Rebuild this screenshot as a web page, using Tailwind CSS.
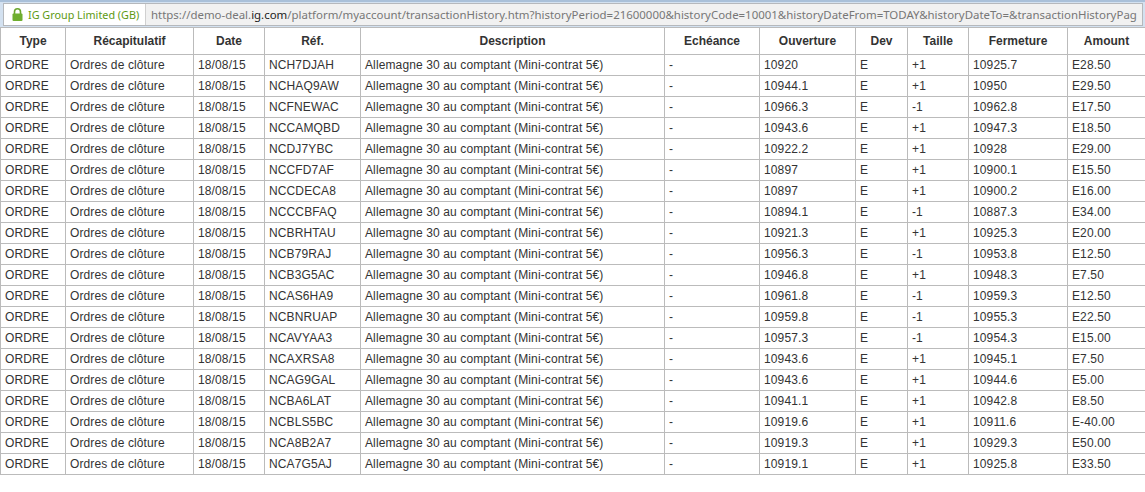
<!DOCTYPE html>
<html lang="fr">
  <head>
    <meta charset="UTF-8" />
    <title>Transaction history</title>
    <script src="https://cdn.jsdelivr.net/npm/@tailwindcss/browser@4"></script>
  </head>
  <body class="bg-white font-['Liberation_Sans',Arial,sans-serif] text-[12px] text-[#333] overflow-hidden">
    <!-- browser address bar -->
    <header class="h-[27px] bg-[#d3e1f0] border-t-2 border-[#a9c0d9] pt-[1px] pl-[3px] pr-[2px] overflow-hidden">
      <div class="h-[23px] flex bg-[#f1f1f1] border border-[#b5b8bc] font-['Noto_Sans',sans-serif] text-[11.45px] leading-[21px] whitespace-nowrap overflow-hidden">
        <div class="w-[142px] shrink-0 flex items-center bg-white border-r border-[#d0d0d0] pl-[8px]">
          <svg class="w-[11px] h-[13px] shrink-0" viewBox="0 0 11 13">
            <path d="M2.5 6V3.8a3 3 0 0 1 6 0V6" fill="none" stroke="#6aa52c" stroke-width="1.6" />
            <rect x="0.5" y="5.5" width="10" height="7.5" rx="1" fill="#6fae2f" />
          </svg>
          <span class="ml-[5px] text-[10.8px] text-[#5d9a12]">IG Group Limited (GB)</span>
        </div>
        <div class="pl-[5px] text-[#777]">https://demo-deal.<span class="text-[#222]">ig.com</span>/platform/myaccount/transactionHistory.htm?historyPeriod=21600000&amp;historyCode=10001&amp;historyDateFrom=TODAY&amp;historyDateTo=&amp;transactionHistoryPag</div>
      </div>
    </header>

    <table class="w-[1145px] table-fixed border-collapse [&_td]:border [&_td]:border-[#bbb] [&_td]:h-[21px] [&_td]:py-0 [&_td]:px-[4px] [&_td]:whitespace-nowrap [&_td]:tracking-[0.12px] [&_th]:border [&_th]:border-[#bbb] [&_th]:h-[27px] [&_th]:p-0 [&_th]:font-bold [&_th]:text-center">
      <colgroup>
        <col class="w-[65px]" /><col class="w-[128px]" /><col class="w-[71px]" /><col class="w-[96px]" /><col class="w-[304px]" /><col class="w-[95px]" /><col class="w-[96px]" /><col class="w-[52px]" /><col class="w-[61px]" /><col class="w-[99px]" /><col class="w-[78px]" />
      </colgroup>
      <thead>
        <tr><th>Type</th><th>Récapitulatif</th><th>Date</th><th>Réf.</th><th>Description</th><th>Echéance</th><th>Ouverture</th><th>Dev</th><th>Taille</th><th>Fermeture</th><th>Amount</th></tr>
      </thead>
      <tbody>
        <tr><td>ORDRE</td><td>Ordres de clôture</td><td>18/08/15</td><td>NCH7DJAH</td><td>Allemagne 30 au comptant (Mini-contrat 5€)</td><td>-</td><td>10920</td><td>E</td><td>+1</td><td>10925.7</td><td>E28.50</td></tr>
        <tr><td>ORDRE</td><td>Ordres de clôture</td><td>18/08/15</td><td>NCHAQ9AW</td><td>Allemagne 30 au comptant (Mini-contrat 5€)</td><td>-</td><td>10944.1</td><td>E</td><td>+1</td><td>10950</td><td>E29.50</td></tr>
        <tr><td>ORDRE</td><td>Ordres de clôture</td><td>18/08/15</td><td>NCFNEWAC</td><td>Allemagne 30 au comptant (Mini-contrat 5€)</td><td>-</td><td>10966.3</td><td>E</td><td>-1</td><td>10962.8</td><td>E17.50</td></tr>
        <tr><td>ORDRE</td><td>Ordres de clôture</td><td>18/08/15</td><td>NCCAMQBD</td><td>Allemagne 30 au comptant (Mini-contrat 5€)</td><td>-</td><td>10943.6</td><td>E</td><td>+1</td><td>10947.3</td><td>E18.50</td></tr>
        <tr><td>ORDRE</td><td>Ordres de clôture</td><td>18/08/15</td><td>NCDJ7YBC</td><td>Allemagne 30 au comptant (Mini-contrat 5€)</td><td>-</td><td>10922.2</td><td>E</td><td>+1</td><td>10928</td><td>E29.00</td></tr>
        <tr><td>ORDRE</td><td>Ordres de clôture</td><td>18/08/15</td><td>NCCFD7AF</td><td>Allemagne 30 au comptant (Mini-contrat 5€)</td><td>-</td><td>10897</td><td>E</td><td>+1</td><td>10900.1</td><td>E15.50</td></tr>
        <tr><td>ORDRE</td><td>Ordres de clôture</td><td>18/08/15</td><td>NCCDECA8</td><td>Allemagne 30 au comptant (Mini-contrat 5€)</td><td>-</td><td>10897</td><td>E</td><td>+1</td><td>10900.2</td><td>E16.00</td></tr>
        <tr><td>ORDRE</td><td>Ordres de clôture</td><td>18/08/15</td><td>NCCCBFAQ</td><td>Allemagne 30 au comptant (Mini-contrat 5€)</td><td>-</td><td>10894.1</td><td>E</td><td>-1</td><td>10887.3</td><td>E34.00</td></tr>
        <tr><td>ORDRE</td><td>Ordres de clôture</td><td>18/08/15</td><td>NCBRHTAU</td><td>Allemagne 30 au comptant (Mini-contrat 5€)</td><td>-</td><td>10921.3</td><td>E</td><td>+1</td><td>10925.3</td><td>E20.00</td></tr>
        <tr><td>ORDRE</td><td>Ordres de clôture</td><td>18/08/15</td><td>NCB79RAJ</td><td>Allemagne 30 au comptant (Mini-contrat 5€)</td><td>-</td><td>10956.3</td><td>E</td><td>-1</td><td>10953.8</td><td>E12.50</td></tr>
        <tr><td>ORDRE</td><td>Ordres de clôture</td><td>18/08/15</td><td>NCB3G5AC</td><td>Allemagne 30 au comptant (Mini-contrat 5€)</td><td>-</td><td>10946.8</td><td>E</td><td>+1</td><td>10948.3</td><td>E7.50</td></tr>
        <tr><td>ORDRE</td><td>Ordres de clôture</td><td>18/08/15</td><td>NCAS6HA9</td><td>Allemagne 30 au comptant (Mini-contrat 5€)</td><td>-</td><td>10961.8</td><td>E</td><td>-1</td><td>10959.3</td><td>E12.50</td></tr>
        <tr><td>ORDRE</td><td>Ordres de clôture</td><td>18/08/15</td><td>NCBNRUAP</td><td>Allemagne 30 au comptant (Mini-contrat 5€)</td><td>-</td><td>10959.8</td><td>E</td><td>-1</td><td>10955.3</td><td>E22.50</td></tr>
        <tr><td>ORDRE</td><td>Ordres de clôture</td><td>18/08/15</td><td>NCAVYAA3</td><td>Allemagne 30 au comptant (Mini-contrat 5€)</td><td>-</td><td>10957.3</td><td>E</td><td>-1</td><td>10954.3</td><td>E15.00</td></tr>
        <tr><td>ORDRE</td><td>Ordres de clôture</td><td>18/08/15</td><td>NCAXRSA8</td><td>Allemagne 30 au comptant (Mini-contrat 5€)</td><td>-</td><td>10943.6</td><td>E</td><td>+1</td><td>10945.1</td><td>E7.50</td></tr>
        <tr><td>ORDRE</td><td>Ordres de clôture</td><td>18/08/15</td><td>NCAG9GAL</td><td>Allemagne 30 au comptant (Mini-contrat 5€)</td><td>-</td><td>10943.6</td><td>E</td><td>+1</td><td>10944.6</td><td>E5.00</td></tr>
        <tr><td>ORDRE</td><td>Ordres de clôture</td><td>18/08/15</td><td>NCBA6LAT</td><td>Allemagne 30 au comptant (Mini-contrat 5€)</td><td>-</td><td>10941.1</td><td>E</td><td>+1</td><td>10942.8</td><td>E8.50</td></tr>
        <tr><td>ORDRE</td><td>Ordres de clôture</td><td>18/08/15</td><td>NCBLS5BC</td><td>Allemagne 30 au comptant (Mini-contrat 5€)</td><td>-</td><td>10919.6</td><td>E</td><td>+1</td><td>10911.6</td><td>E-40.00</td></tr>
        <tr><td>ORDRE</td><td>Ordres de clôture</td><td>18/08/15</td><td>NCA8B2A7</td><td>Allemagne 30 au comptant (Mini-contrat 5€)</td><td>-</td><td>10919.3</td><td>E</td><td>+1</td><td>10929.3</td><td>E50.00</td></tr>
        <tr><td>ORDRE</td><td>Ordres de clôture</td><td>18/08/15</td><td>NCA7G5AJ</td><td>Allemagne 30 au comptant (Mini-contrat 5€)</td><td>-</td><td>10919.1</td><td>E</td><td>+1</td><td>10925.8</td><td>E33.50</td></tr>
      </tbody>
    </table>
  </body>
</html>
